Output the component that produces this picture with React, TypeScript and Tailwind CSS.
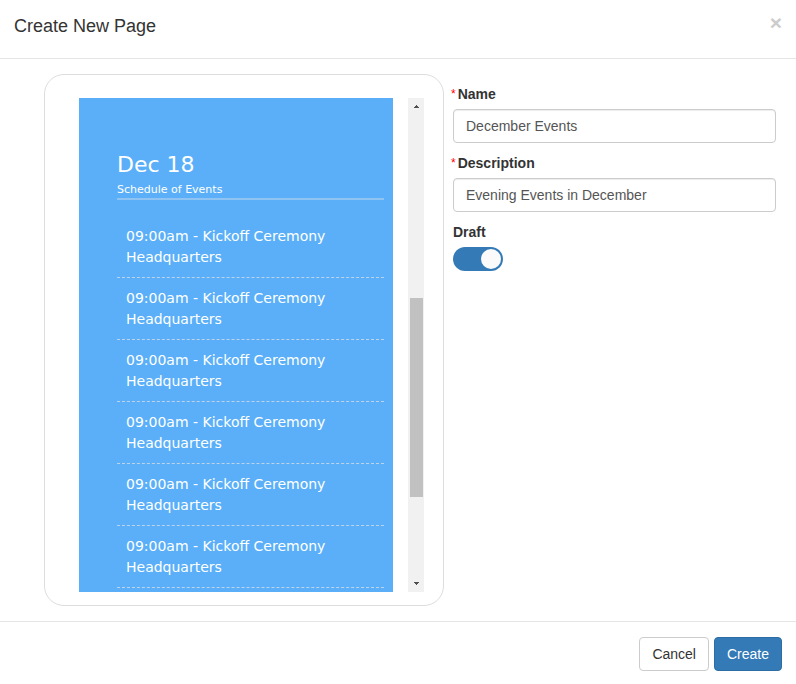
import { useState } from "react";

type EventItem = {
  time: string;
  title: string;
  location: string;
};

const events: EventItem[] = Array.from({ length: 6 }, () => ({
  time: "09:00am",
  title: "Kickoff Ceremony",
  location: "Headquarters",
}));

function ScrollTrack() {
  return (
    <div className="flex w-4 shrink-0 flex-col items-center justify-between bg-[#f1f1f1]" aria-hidden="true">
      <svg width="16" height="16" viewBox="0 0 16 16" shapeRendering="crispEdges">
        <path d="M8 7h1v1h1v1h1v1H6V9h1V8h1z" fill="#505050" />
      </svg>
      <div className="flex min-h-0 w-full grow flex-col pr-px pl-0.5">
        <div className="grow-[184]" />
        <div className="grow-[199] bg-[#c1c1c1]" />
        <div className="grow-[79]" />
      </div>
      <svg width="16" height="16" viewBox="0 0 16 16" shapeRendering="crispEdges">
        <path d="M6 6h5v1h-1v1H9v1H8V8H7V7H6z" fill="#505050" />
      </svg>
    </div>
  );
}

function PagePreview() {
  return (
    <section className="flex rounded-[20px] border border-[#ddd] pt-[23px] pr-[19px] pb-[13px] pl-[34px]">
      <div className="mr-[15px] min-w-0 grow bg-[#5aaff8] pt-[53px] pr-[9px] pb-1 pl-[38px] font-['DejaVu_Sans',Verdana,sans-serif] text-white">
        <header className="mb-[26px] border-b-2 border-[#8fc4f2]">
          <h2 className="mb-0.5 text-[22px] leading-7">Dec 18</h2>
          <p className="text-[11px] leading-[17px] font-medium">Schedule of Events</p>
        </header>
        <ul>
          {events.map((event, idx) => (
            <li key={idx} className="mb-[10px] border-b border-dashed border-[#bcd3e8] pb-[9px] pl-[9px] text-[14px] leading-[21px] last:mb-0">
              <div>
                {event.time} - {event.title}
              </div>
              <div>{event.location}</div>
            </li>
          ))}
        </ul>
      </div>
      <ScrollTrack />
    </section>
  );
}

type FieldProps = {
  id: string;
  label: string;
  value: string;
  onChange: (value: string) => void;
};

function TextField({ id, label, value, onChange }: FieldProps) {
  return (
    <div className="mb-[10px]">
      <label htmlFor={id} className="mb-[5px] -ml-0.5 flex gap-[2px] font-bold">
        <span className="text-[12px] leading-5 font-normal text-[#f00]">*</span>
        {label}
      </label>
      <input
        id={id}
        type="text"
        required
        value={value}
        onChange={(e) => onChange(e.target.value)}
        className="block h-[34px] w-full rounded border border-[#ccc] px-3 text-[#555] shadow-[inset_0_1px_1px_rgba(0,0,0,0.075)] outline-none focus:border-[#66afe9]"
      />
    </div>
  );
}

export default function App() {
  const [name, setName] = useState("December Events");
  const [description, setDescription] = useState("Evening Events in December");
  const [draft, setDraft] = useState(true);

  return (
    <main className="bg-white font-['Liberation_Sans',Arial,sans-serif] text-[14px] leading-5 text-[#333]">
      <header className="flex items-start justify-between border-b border-[#e5e5e5] px-[14px] pt-3 pb-[18px]">
        <h1 className="text-[18px] leading-7">Create New Page</h1>
        <button type="button" aria-label="Close" className="text-[21px] leading-[21px] font-bold text-[#ccc] hover:text-[#888]">
          ×
        </button>
      </header>

      <form onSubmit={(e) => e.preventDefault()}>
        <div className="grid grid-cols-[minmax(0,400px)_minmax(0,1fr)] items-start gap-[9px] pt-[15px] pr-5 pb-[15px] pl-11">
          <PagePreview />
          <div className="pt-[10px]">
            <TextField id="name" label="Name" value={name} onChange={setName} />
            <TextField id="description" label="Description" value={description} onChange={setDescription} />
            <label htmlFor="draft" className="mb-[5px] block font-bold">
              Draft
            </label>
            <input
              id="draft"
              type="checkbox"
              role="switch"
              checked={draft}
              onChange={(e) => setDraft(e.target.checked)}
              className="flex h-6 w-[50px] cursor-pointer appearance-none items-center rounded-full bg-[#ccc] px-[2px] before:size-5 before:rounded-full before:bg-[#fafafa] checked:justify-end checked:bg-[#337ab7]"
            />
          </div>
        </div>

        <footer className="flex justify-end gap-[5px] border-t border-[#e5e5e5] px-[14px] pt-[15px] pb-[13px]">
          <button type="button" className="rounded border border-[#ccc] bg-white px-3 py-[6px] hover:bg-[#e6e6e6]">
            Cancel
          </button>
          <button type="submit" className="rounded border border-[#2e6da4] bg-[#337ab7] px-3 py-[6px] text-white hover:bg-[#286090]">
            Create
          </button>
        </footer>
      </form>
    </main>
  );
}
